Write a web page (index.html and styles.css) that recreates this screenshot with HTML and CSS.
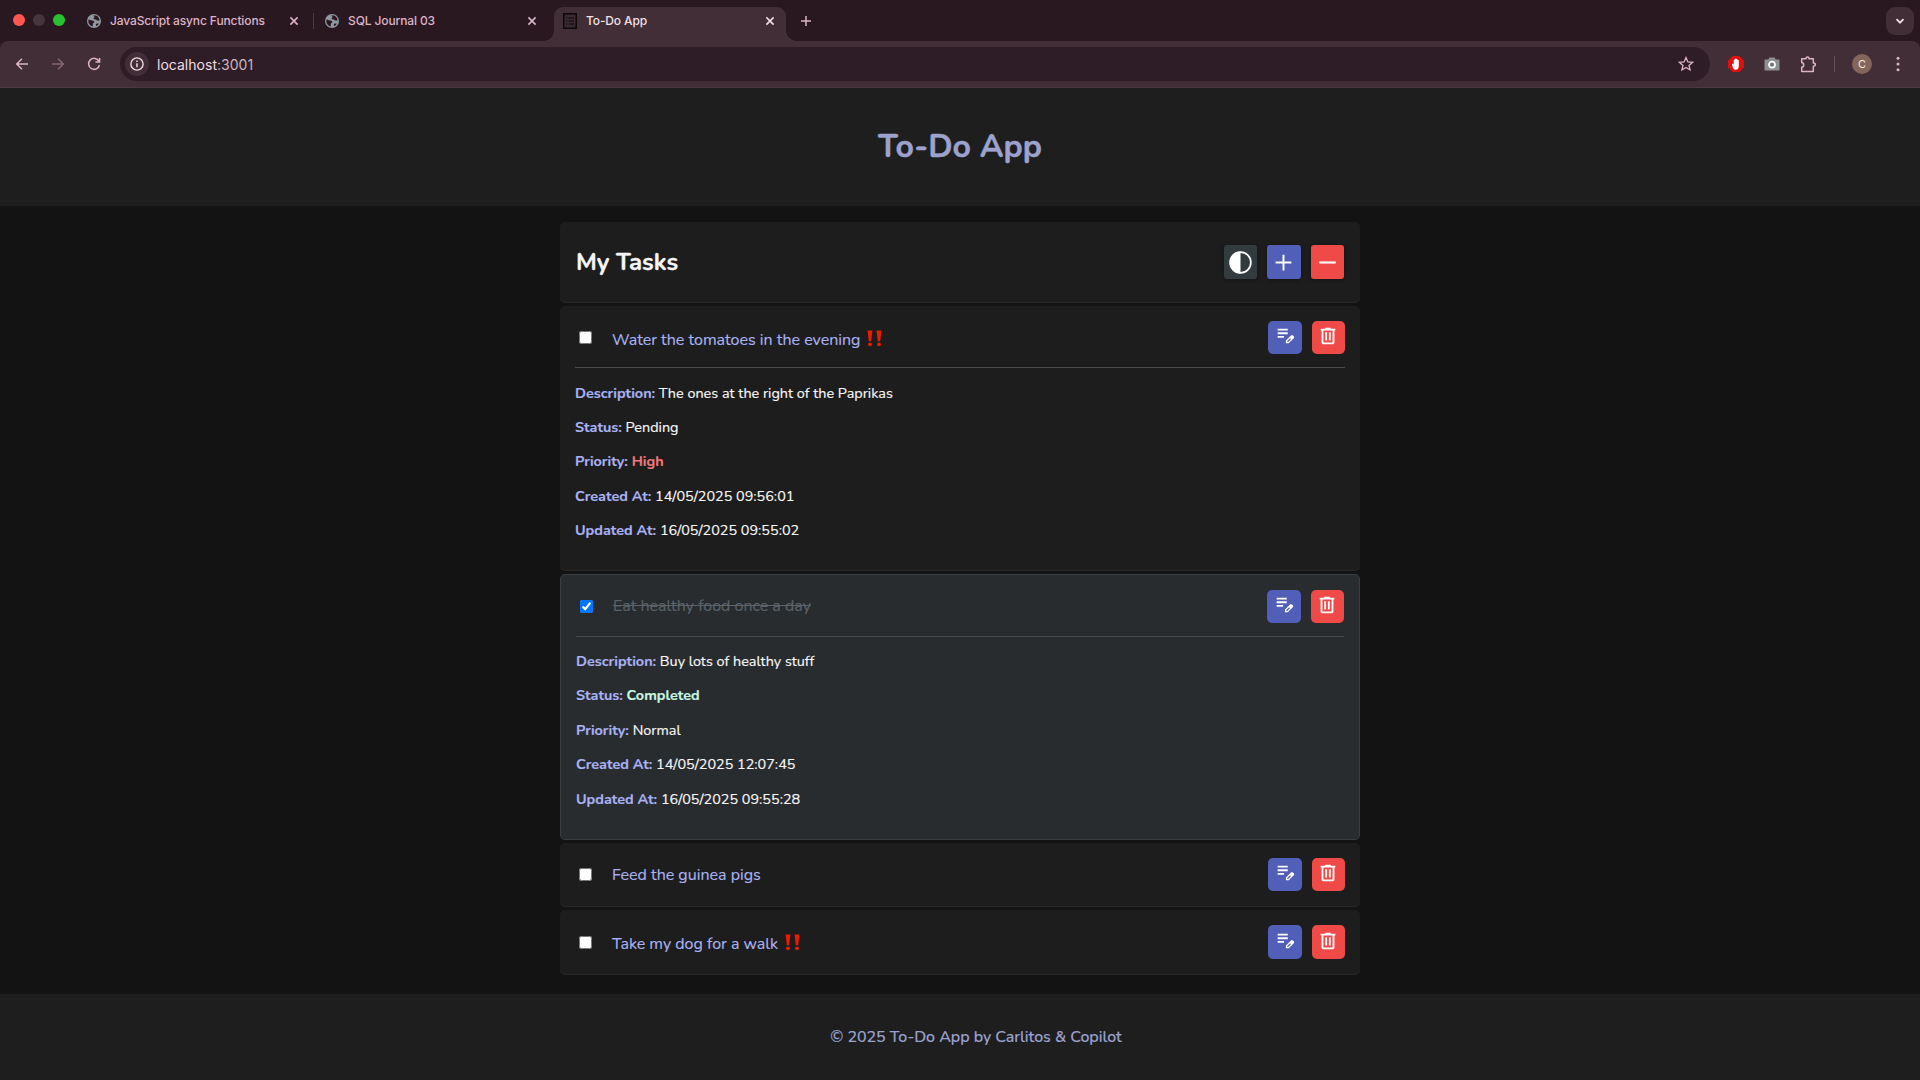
FILE: index.html
```
<!DOCTYPE html>
<html lang="en">
<head>
<meta charset="utf-8">
<title>To-Do App</title>
<link rel="stylesheet" href="styles.css">
</head>
<body>
<svg class="defs" width="0" height="0" aria-hidden="true">
  <symbol id="i-close" viewBox="0 0 12 12"><path d="M2.4 2.4l7.2 7.2M9.6 2.4L2.4 9.6" fill="none" stroke="currentColor" stroke-width="1.6"/></symbol>
  <symbol id="i-globe" viewBox="0 0 14 14"><circle cx="7" cy="7" r="7" fill="#8f98a0"/><path d="M1.5 5.6c1.6 0 2 .9 3.300 1 .9.100 2.400.300 2.500 1.300.100 1-1.400.900-1.500 1.800v2.700C3 12 1.300 9.700 1.300 7zM6.300 1.500h2.900c1.800.900 3 2.400 3.300 4.500-.700.900-1.200.700-1.900.600-1-.200-.9-1-1.900-1.200-.9-.100-2-.100-2.100-1 0-.7.900-.8 1-1.400 0-.5-1.300-.7-1.300-1.500zM9.300 9.800c.9-.600 1.700-.300 2.500-.100-.6 1.100-1.500 1.900-2.600 2.400-.4-.9-.5-1.700.1-2.300z" fill="#2a1821"/></symbol>
  <symbol id="i-edit" viewBox="0 -960 960 960"><path fill="currentColor" d="M160-400v-80h280v80H160Zm0-160v-80h440v80H160Zm0-160v-80h440v80H160Zm360 560v-123l221-220q9-9 20-13t22-4q12 0 23 4.500t20 13.500l37 37q8 9 12.500 20t4.500 22q0 11-4 22.500T863-380L643-160H520Zm300-263-37-37 37 37ZM580-220h38l121-122-18-19-19-18-122 121v38Zm141-141-19-18 37 37-18-19Z"/></symbol>
  <symbol id="i-trash" viewBox="0 -960 960 960"><path fill="currentColor" d="M280-120q-33 0-56.500-23.500T200-200v-520h-40v-80h200v-40h240v40h200v80h-40v520q0 33-23.500 56.500T680-120H280Zm400-600H280v520h400v-520ZM360-280h80v-360h-80v360Zm160 0h80v-360h-80v360Z"/></symbol>
  <symbol id="i-urgent" viewBox="0 0 15 17"><path fill="#f01a00" d="M.6.600h4.800L4.200 11.300H1.800zM9.600.600h4.800l-1.200 10.700h-2.400z"/><circle cx="3" cy="14.300" r="1.900" fill="#f01a00"/><circle cx="12" cy="14.300" r="1.900" fill="#f01a00"/></symbol>
</svg>

<div class="browser">
  <div class="tabstrip">
    <div class="lights"><i class="light red"></i><i class="light idle"></i><i class="light green"></i></div>
    <div class="tab tab-first"><svg class="fav"><use href="#i-globe"/></svg><span>JavaScript async Functions</span><svg class="x"><use href="#i-close"/></svg></div>
    <div class="tab tab-second"><svg class="fav"><use href="#i-globe"/></svg><span>SQL Journal 03</span><svg class="x"><use href="#i-close"/></svg></div>
    <div class="tab tab-active">
      <svg class="fav-list" viewBox="0 0 14 16"><rect x=".75" y=".75" width="12.500" height="14.500" fill="#3b2a31" stroke="#0c090a" stroke-width="1.500"/><path d="M3.200 5h1.300M3.200 8h1.300M3.200 11h1.300M5.500 5H11M5.500 8H11M5.500 11H11" stroke="#0c090a" stroke-width="1.200"/></svg>
      <span>To-Do App</span><svg class="x"><use href="#i-close"/></svg>
    </div>
    <svg class="newtab" viewBox="0 0 12 12"><path d="M6 1v10M1 6h10" fill="none" stroke="currentColor" stroke-width="1.500"/></svg>
    <div class="tabsearch"><svg width="10" height="8" viewBox="0 0 10 8"><path d="M1.500 2.200L5 5.700l3.500-3.500" fill="none" stroke="currentColor" stroke-width="1.800"/></svg></div>
  </div>
  <div class="toolbar">
    <svg class="nav" viewBox="0 0 14 14"><path d="M13 7H2M7 1.700L1.700 7 7 12.300" fill="none" stroke="currentColor" stroke-width="1.500"/></svg>
    <svg class="nav dim" viewBox="0 0 14 14"><path d="M1 7h11M7 1.700L12.300 7 7 12.300" fill="none" stroke="currentColor" stroke-width="1.500"/></svg>
    <svg class="nav" viewBox="0 0 14 14"><path d="M12 4.300A5.500 5.500 0 1 0 12.500 8M12.600 1v4H8.500" fill="none" stroke="currentColor" stroke-width="1.500"/></svg>
    <div class="omnibox">
      <div class="siteinfo"><svg width="14" height="14" viewBox="0 0 14 14"><circle cx="7" cy="7" r="6.100" fill="none" stroke="currentColor" stroke-width="1.400"/><path d="M7 6.300v4M7 3.500v1.500" stroke="currentColor" stroke-width="1.500"/></svg></div>
      <span class="url">localhost<span class="port">:3001</span></span>
      <svg class="star" viewBox="0 0 16 16"><path d="M8 1.600l1.900 4.300 4.700.400-3.600 3.100 1.100 4.600L8 11.500 3.900 14 5 9.400 1.400 6.300l4.700-.4z" fill="none" stroke="currentColor" stroke-width="1.300"/></svg>
    </div>
    <svg class="ext" viewBox="0 0 16 16"><path d="M4.700 0h6.600L16 4.700v6.600L11.300 16H4.700L0 11.300V4.700z" fill="#e01010"/><path d="M3.900 8.300c0-.8 1-.9 1.300-.2l.5.900V4.200c0-.8 1.200-.8 1.200 0V3c0-.8 1.300-.8 1.300 0v.3c0-.8 1.300-.8 1.300 0v1.300c0-.8 1.300-.8 1.300 0V10c0 2.300-1 3.700-3.100 3.700-1.800 0-2.500-1.100-2.900-2.500z" fill="#fff"/></svg>
    <svg class="ext" viewBox="0 0 16 16"><path d="M5.300 1.500h5.400l1 2H14.500a1 1 0 0 1 1 1v9a1 1 0 0 1-1 1h-13a1 1 0 0 1-1-1v-9a1 1 0 0 1 1-1H4.300z" fill="#8d8f90"/><circle cx="8" cy="8.700" r="3" fill="#777" stroke="#fff" stroke-width="1.700"/></svg>
    <svg class="puzzle" viewBox="0 0 17 17"><path d="M1.700 2.800H6q0-1.700 1.500-1.700T9 2.800h4.300v4.200q2 0 2 1.600t-2 1.600v5.200H1.700v-4.200q2-.2 2-2.300t-2-2.300z" fill="none" stroke="currentColor" stroke-width="1.500" stroke-linejoin="round"/></svg>
    <i class="divider"></i>
    <div class="avatar">C</div>
    <svg class="menu" viewBox="0 0 4 16"><g fill="currentColor"><circle cx="2" cy="2.300" r="1.500"/><circle cx="2" cy="8" r="1.500"/><circle cx="2" cy="13.700" r="1.500"/></g></svg>
  </div>
</div>

<header class="app-header"><h1>To-Do App</h1></header>

<main class="board">
  <section class="panel panel-title">
    <h2>My Tasks</h2>
    <div class="actions">
      <button class="btn contrast"><svg viewBox="0 0 24 24"><circle cx="12" cy="12" r="9.200" fill="none" stroke="currentColor" stroke-width="1.500"/><path d="M12 2.300a9.700 9.700 0 0 0 0 19.400z" fill="currentColor"/></svg></button>
      <button class="btn edit"><svg viewBox="0 0 24 24"><path d="M12 5v14M5 12h14" stroke="currentColor" stroke-width="1.700"/></svg></button>
      <button class="btn delete"><svg viewBox="0 0 24 24"><path d="M4.700 12h14.600" stroke="currentColor" stroke-width="1.900"/></svg></button>
    </div>
  </section>

  <article class="panel task open">
    <div class="row">
      <input type="checkbox"><span class="name urgent">Water the tomatoes in the evening<svg class="bang"><use href="#i-urgent"/></svg></span>
      <div class="actions"><button class="btn edit"><svg><use href="#i-edit"/></svg></button><button class="btn delete"><svg><use href="#i-trash"/></svg></button></div>
    </div>
    <div class="details">
      <p><strong>Description:</strong> The ones at the right of the Paprikas</p>
      <p><strong>Status:</strong> Pending</p>
      <p><strong>Priority:</strong> <b class="high">High</b></p>
      <p><strong>Created At:</strong> 14/05/2025 09:56:01</p>
      <p><strong>Updated At:</strong> 16/05/2025 09:55:02</p>
    </div>
  </article>

  <article class="panel task open completed">
    <div class="row">
      <input type="checkbox" checked><span class="name">Eat healthy food once a day</span>
      <div class="actions"><button class="btn edit"><svg><use href="#i-edit"/></svg></button><button class="btn delete"><svg><use href="#i-trash"/></svg></button></div>
    </div>
    <div class="details">
      <p><strong>Description:</strong> Buy lots of healthy stuff</p>
      <p><strong>Status:</strong> <b class="done">Completed</b></p>
      <p><strong>Priority:</strong> Normal</p>
      <p><strong>Created At:</strong> 14/05/2025 12:07:45</p>
      <p><strong>Updated At:</strong> 16/05/2025 09:55:28</p>
    </div>
  </article>

  <article class="panel task">
    <div class="row">
      <input type="checkbox"><span class="name">Feed the guinea pigs</span>
      <div class="actions"><button class="btn edit"><svg><use href="#i-edit"/></svg></button><button class="btn delete"><svg><use href="#i-trash"/></svg></button></div>
    </div>
  </article>

  <article class="panel task last">
    <div class="row">
      <input type="checkbox"><span class="name urgent">Take my dog for a walk<svg class="bang"><use href="#i-urgent"/></svg></span>
      <div class="actions"><button class="btn edit"><svg><use href="#i-edit"/></svg></button><button class="btn delete"><svg><use href="#i-trash"/></svg></button></div>
    </div>
  </article>
</main>

<footer class="app-footer">© 2025 To-Do App by Carlitos &amp; Copilot</footer>
</body>
</html>
```
FILE: styles.css
```
* { box-sizing: border-box; }
html { background: #131313; }
body {
  margin: 0;
  height: 1080px;
  overflow: hidden;
  display: flex;
  flex-direction: column;
  background: #131313;
  color: #f8f8f8;
  font-family: Nunito, "Noto Sans", sans-serif;
  font-size: 16px;
  -webkit-text-stroke: .15px;
}
svg { display: block; flex: none; }
.defs { position: absolute; }

/* Browser window */
.browser {
  flex: none;
  height: 88px;
  background: #2a1821;
  color: #dcb4c6;
  font-family: Inter, "Liberation Sans", sans-serif;
  -webkit-text-stroke: 0;
}
.tabstrip { display: flex; align-items: center; height: 41px; padding-right: 6px; }
.lights { display: flex; gap: 8px; width: 74px; padding-left: 13px; box-sizing: content-box; margin-top: -1px; }
.light { width: 12px; height: 12px; border-radius: 50%; }
.red { background: #ff5650; }
.idle { background: #46353d; }
.green { background: #28c131; }
.tab { display: flex; align-items: center; gap: 9px; height: 34px; font-size: 12px; font-weight: 500; letter-spacing: -.12px; white-space: nowrap; }
.tab span { flex: 1; }
.fav { width: 14px; height: 14px; }
.fav-list { width: 14px; height: 16px; }
.x { width: 12px; height: 12px; }
.tab-first { width: 226px; padding-right: 13px; }
.tab-second { width: 241px; padding: 0 16px 0 12px; position: relative; }
.tab-second::before { content: ""; position: absolute; left: 0; top: 9px; width: 1px; height: 16px; background: #4f3a44; }
.tab-active {
  position: relative;
  width: 232px;
  align-self: flex-end;
  padding: 0 10px 7px 9px;
  background: #422e36;
  border-radius: 9px 9px 0 0;
  color: #f3e0e8;
}
.tab-active::before, .tab-active::after { content: ""; position: absolute; bottom: 0; width: 10px; height: 10px; }
.tab-active::before { left: -10px; background: radial-gradient(circle at 0 0, transparent 9.500px, #422e36 10px); }
.tab-active::after { right: -10px; background: radial-gradient(circle at 100% 0, transparent 9.500px, #422e36 10px); }
.newtab { width: 12px; height: 12px; margin-left: 14px; }
.tabsearch {
  display: flex; align-items: center; justify-content: center;
  width: 28px; height: 28px; margin-left: auto;
  background: #422e36; border-radius: 9px; color: #f3e0e8;
}
.toolbar {
  display: flex; align-items: center;
  height: 47px;
  padding: 0 20px 0 15px;
  background: #422e36;
  border-bottom: 1px solid #493a40;
  border-radius: 8px 8px 0 0;
}
.nav { width: 14px; height: 14px; margin-right: 22px; }
.nav.dim { color: #846873; }
.omnibox {
  display: flex; align-items: center;
  width: 1590px; height: 34px;
  margin-left: -3px; padding: 0 16px 0 5px;
  background: #2e1d26; border-radius: 17px;
}
.siteinfo { display: flex; align-items: center; justify-content: center; width: 24px; height: 24px; border-radius: 50%; background: #422e36; color: #f0dbe4; }
.url { margin-left: 8px; flex: 1; font-size: 14px; letter-spacing: .02px; color: #f0dde5; }
.port { color: #cdb6c0; }
.star { width: 16px; height: 16px; }
.ext { width: 16px; height: 16px; margin-left: 18px; }
.ext + .ext { margin-left: 20px; }
.puzzle { width: 17px; height: 17px; margin-left: 20px; }
.divider { width: 1px; height: 16px; margin-left: 17px; background: #66505a; }
.avatar { width: 20px; height: 20px; margin-left: 17px; border-radius: 50%; background: #84665a; color: #f7ebe6; font-size: 11px; line-height: 20px; text-align: center; }
.menu { width: 4px; height: 16px; margin-left: 24px; }

/* Page */
.app-header { flex: none; display: flex; justify-content: center; height: 118px; padding-top: 37px; background: #1e1e1e; }
h1, h2, p { margin: 0; }
h1 { font-size: 32px; line-height: 44px; font-weight: 700; color: #9ca1cd; -webkit-text-stroke: .4px; }

.board { flex: 1; display: flex; flex-direction: column; gap: 3px; width: 800px; margin: 0 auto; padding-top: 16px; }
.panel { background: #1d1d1d; border-radius: 5px; box-shadow: inset 0 -1px 0 #272727; }
.panel-title { display: flex; justify-content: space-between; height: 81px; padding: 23px 16px 0; }
h2 { padding-top: 1px; font-size: 24px; line-height: 33px; font-weight: 700; color: #f5f5f5; -webkit-text-stroke: .3px; }
.actions { display: flex; gap: 10px; }
.btn {
  display: flex; align-items: center; justify-content: center;
  width: 33.500px; height: 33px; padding: 0;
  border: 0; border-radius: 5px; color: #fff;
}
.panel-title .btn { height: 34px; border-radius: 3px; box-shadow: 0 1px 4px rgba(0, 0, 0, .3); }
.btn svg { width: 22px; height: 22px; margin-bottom: 3px; }
.panel-title .btn svg { width: 27px; height: 27px; margin: 0; }
.contrast { background: #323c3e; }
.edit { background: #525fb8; }
.delete { background: #ef4a48; }

.task { height: 64px; padding: 15px; }
.task.last { height: 65px; }
.task.open { height: 265px; }
.task.completed { height: 266px; background: #282c2f; border: 1px solid #3b3e40; box-shadow: none; }
.row { display: flex; align-items: center; height: 33px; }
.row input { width: 13px; height: 13px; margin: 0 20px 0 4px; }
.last .row { height: 34px; }
.last .row input { margin-top: 1px; }
.last .btn { height: 34px; }
.name { flex: 1; line-height: 22px; color: #a9b2f1; }
.name.urgent { display: flex; align-items: center; padding-top: 4px; }
.bang { width: 15px; height: 17px; margin: -3px 0 0 6.500px; }
.open .row { box-sizing: content-box; padding-bottom: 13px; border-bottom: 1px solid #4a4a4a; }
.completed .name { color: #5c6268; text-decoration: line-through; padding-bottom: 1px; }
.details { display: flex; flex-direction: column; gap: 14.400px; padding-top: 14.500px; font-size: 14.400px; line-height: 20px; }
.completed .details { padding-top: 14px; }
.details strong { color: #a9b2f3; font-weight: 700; }
.high { color: #ee7a7a; }
.done { color: #c9f8e4; }

.app-footer { flex: none; height: 86px; padding-left: 32px; line-height: 86px; text-align: center; font-weight: 500; letter-spacing: -.04px; color: #9aa2cf; background: #1e1e1e; }
```
